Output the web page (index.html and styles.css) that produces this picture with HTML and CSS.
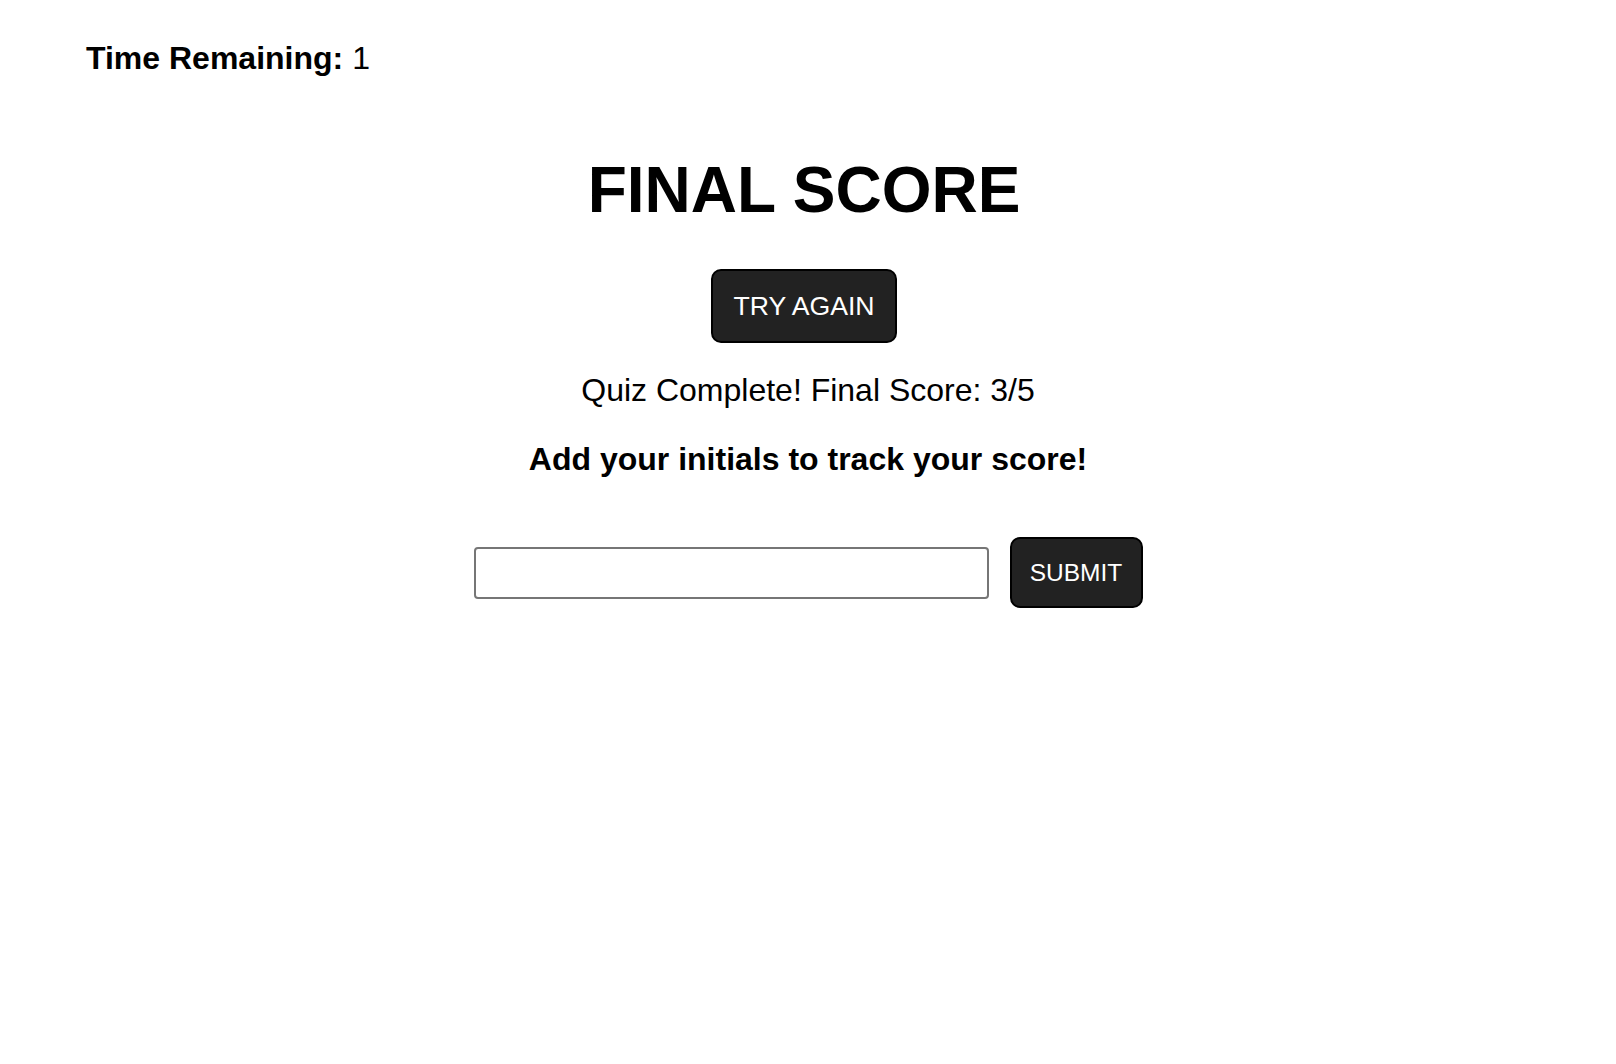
FILE: index.html
```html
<!DOCTYPE html>
<html lang="en">
<head>
<meta charset="utf-8">
<title>Quiz</title>
<link rel="stylesheet" href="styles.css">
</head>
<body>
<header class="topbar">
  <p class="timer"><span class="timer-label">Time Remaining:</span> <span class="timer-value">1</span></p>
</header>
<main class="final">
  <h1 class="final-title">FINAL SCORE</h1>
  <button class="btn btn-again" type="button">TRY AGAIN</button>
  <p class="final-score">Quiz Complete! Final Score: 3/5</p>
  <p class="final-prompt">Add your initials to track your score!</p>
  <form class="initials-form">
    <input class="initials-input" type="text" aria-label="Initials">
    <button class="btn btn-submit" type="button">SUBMIT</button>
  </form>
</main>
</body>
</html>
```

FILE: styles.css
```css
html, body {
  margin: 0;
  padding: 0;
  background: #fff;
  color: #000;
}

body {
  font-family: "Liberation Sans", Arial, Helvetica, sans-serif;
}

.topbar {
  padding: 40px 0 0 86px;
}

.timer {
  margin: 0;
  font-size: 32px;
  line-height: 36px;
}

.timer-label {
  font-weight: bold;
}

.final {
  display: flex;
  flex-direction: column;
  align-items: center;
}

.final-title {
  margin: 78px 0 0;
  font-size: 64px;
  line-height: 72px;
  font-weight: bold;
  transform: translateX(-4px);
}

.btn {
  box-sizing: border-box;
  font-family: "Liberation Sans", Arial, Helvetica, sans-serif;
  font-size: 26.67px;
  color: #fff;
  background: #222;
  border: 2px solid #000;
  border-radius: 10px;
  cursor: pointer;
}

.btn-again {
  margin-top: 43px;
  height: 74px;
  width: 186px;
  padding: 0;
  transform: translateX(-4px);
}

.final-score {
  margin: 29px 0 0;
  font-size: 32px;
  line-height: 36px;
}

.final-prompt {
  margin: 33px 0 0;
  font-size: 32px;
  line-height: 36px;
  font-weight: bold;
}

.initials-form {
  margin-top: 60px;
  display: flex;
  align-items: center;
  gap: 21px;
}

.initials-input {
  box-sizing: border-box;
  width: 515px;
  height: 52px;
  border: 2px solid #767676;
  border-radius: 4px;
  padding: 2px 6px;
  font-size: 26.67px;
  font-family: "Liberation Sans", Arial, sans-serif;
  background: #fff;
}

.btn-submit {
  height: 71px;
  width: 133px;
  padding: 0;
  font-size: 24.5px;
}
```
